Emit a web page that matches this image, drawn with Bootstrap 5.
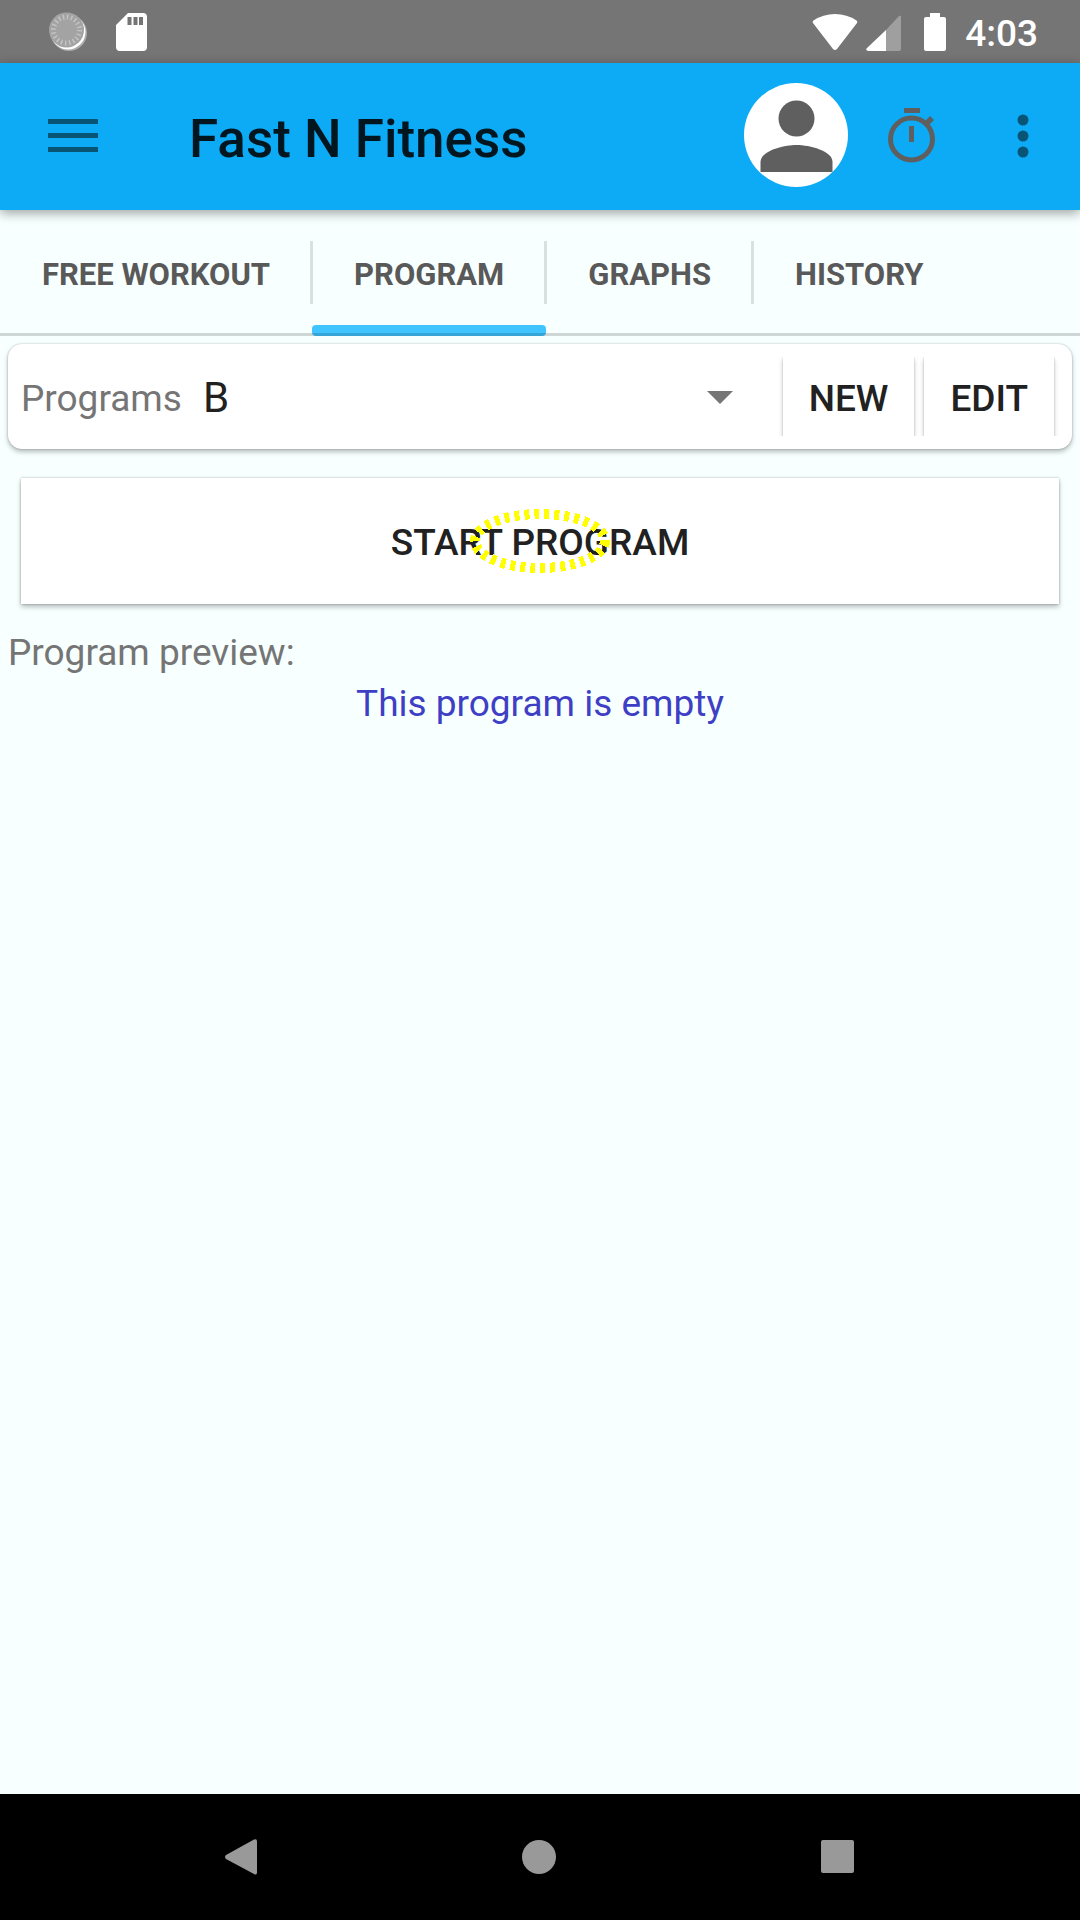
<!DOCTYPE html>
<html lang="en">
<head>
<meta charset="utf-8">
<meta name="viewport" content="width=device-width, initial-scale=1">
<title>Fast N Fitness</title>
<link href="https://cdn.jsdelivr.net/npm/bootstrap@5.3.0/dist/css/bootstrap.min.css" rel="stylesheet">
<style>
  body { font-family: Roboto, "Noto Sans", sans-serif; font-size: 37px; line-height: 51px; background: #f7ffff; color: #212121; }
  svg { display: block; flex: none; }
  .status-strip { height: 63px; background: #757575; color: #fff; padding: 0 42px 0 48px; font-weight: 500; }
  .status-strip time { margin-left: 19px; padding-top: 3px; }
  .app-bar { height: 147px; background: #0dabf6; padding: 0 51px 2px 48px; position: relative; z-index: 2; box-shadow: 0 3px 11px rgba(0,0,0,.38); }
  .app-bar h1 { font-size: 53px; line-height: 64px; font-weight: 500; margin: 6px 0 0 91px; color: #02161f; }
  .icon-btn { border: 0; background: none; padding: 0; }
  .more-btn { padding-left: 41px; }
  .tab-strip { height: 126px; position: relative; }
  .tab-strip::after { content: ""; position: absolute; inset: auto 0 0 0; height: 3px; background: rgba(0,0,0,.16); pointer-events: none; }
  .tab-link { display: flex; align-items: center; height: 126px; padding: 2px 42px 0; font-size: 31px; font-weight: 700; color: #595959; text-decoration: none; position: relative; }
  .tab-item + .tab-item .tab-link::before { content: ""; position: absolute; left: -2px; top: 31px; width: 3px; height: 63px; background: #d9e0e0; }
  .tab-link.active::after { content: ""; position: absolute; inset: auto 0 0 0; height: 11px; border-radius: 4px; background: #40c4ff; }
  .raised { background: #fff; box-shadow: 0 0 2px rgba(0,0,0,.28), 0 3px 5px rgba(0,0,0,.26); }
  .program-card { margin: 8px 8px 0; height: 105px; padding: 13px; border-radius: 14px; }
  .program-card label, .muted-text { color: #757575; }
  .program-card label { padding-top: 3px; }
  .program-select { display: block; border: 0; background: none; appearance: none; font-size: 42px; line-height: 56px; padding: 3px 60px 0 21px; color: #212121; width: 100%; }
  .select-wrap svg { position: absolute; right: 45px; top: 50%; margin-top: -6px; pointer-events: none; }
  .btn-clip { overflow: hidden; padding: 0 5px; }
  .side-btn { display: block; border: 0; padding: 3px 26px 0; height: 79px; font-weight: 500; color: #212121; background: #fff; box-shadow: 0 0 2px rgba(0,0,0,.2), 0 3px 5px rgba(0,0,0,.2); }
  .start-btn { border: 0; height: 126px; margin: 29px 21px 0; padding-top: 3px; font-weight: 500; color: #212121; position: relative; }
  .focus-mark { position: absolute; left: 50%; top: 50%; transform: translate(-50%, -50%); pointer-events: none; }
  .preview-text { padding: 23px 8px 0; }
  .empty-text { color: #3f3fc5; }
  .nav-strip { height: 126px; background: #000; padding: 0 225px; }
</style>
<script src="https://cdn.jsdelivr.net/npm/bootstrap@5.3.0/dist/js/bootstrap.bundle.min.js"></script>
</head>
<body>
<div class="d-flex flex-column min-vh-100">
  <div class="status-strip d-flex align-items-center">
    <svg width="40" height="40" viewBox="0 0 40 40">
      <circle cx="21" cy="21" r="18" fill="#aaa"/>
      <circle cx="20" cy="20" r="17.500" fill="#fff"/>
      <circle cx="18.500" cy="18" r="17.500" fill="#a3a3a3"/>
      <circle cx="18.500" cy="18" r="13" fill="none" stroke="#c4c4c4" stroke-width="5" stroke-dasharray="1.400 2.684"/>
    </svg>
    <svg class="ms-4" width="40" height="40" viewBox="0 0 40 40">
      <path fill="#fff" fill-rule="evenodd" d="M16 1h15q4 0 4 4v30q0 4-4 4H8q-4 0-4-4V13zM15.500 5v8h4V5zM21.500 5v8h4V5zM27 5v8h4V5z"/>
    </svg>
    <svg class="ms-auto" width="46" height="38" viewBox="0 0 46 38">
      <path fill="#fff" d="M1 10Q0 8.500 1.500 7.500Q11 1 23 1t21.500 6.500Q46 8.500 45 10L25 36q-2 2-4 0z"/>
    </svg>
    <svg class="ms-2" width="36" height="38" viewBox="0 0 36 38">
      <path fill="#9f9f9f" d="M20 17L33 3q2-1 2 1v32q0 2-2 2H20z"/>
      <path fill="#fff" d="M20 17v21H2q-3-1-1-3z"/>
    </svg>
    <svg width="44" height="40" viewBox="0 0 44 40">
      <path fill="#fff" d="M28 1h10v4h4q2 0 2 2v30q0 2-2 2H24q-2 0-2-2V7q0-2 2-2h4z"/>
    </svg>
    <time>4:03</time>
  </div>

  <header class="app-bar d-flex align-items-center">
    <button class="icon-btn" type="button" aria-label="Open menu">
      <svg width="50" height="34" viewBox="0 0 50 34" fill="#075475"><path d="M0 0h50v5H0zM0 14h50v5H0zM0 28h50v5H0z"/></svg>
    </button>
    <h1>Fast N Fitness</h1>
    <button class="icon-btn ms-auto" type="button" aria-label="Profile">
      <svg width="104" height="106" viewBox="0 0 104 106">
        <circle cx="52" cy="52" r="52" fill="#fff"/>
        <circle cx="52.500" cy="35.500" r="18" fill="#5f5f5f"/>
        <path fill="#5f5f5f" d="M16.500 89V79C16.500 68 39 62 52.500 62S88.500 68 88.500 79V89z"/>
      </svg>
    </button>
    <button class="icon-btn" type="button" aria-label="Stopwatch">
      <svg width="128" height="60" viewBox="0 0 128 60">
        <circle cx="63.500" cy="33" r="21" fill="none" stroke="#5f5f5f" stroke-width="5"/>
        <path fill="#5f5f5f" d="M56 2h16v5H56zM61 20h5v16h-5zM76 16l6-6 4 4-6 6z"/>
      </svg>
    </button>
    <button class="icon-btn more-btn" type="button" aria-label="More options">
      <svg width="12" height="44" viewBox="0 0 12 44" fill="#075475"><circle cx="6" cy="6" r="5.500"/><circle cx="6" cy="22" r="5.500"/><circle cx="6" cy="38" r="5.500"/></svg>
    </button>
  </header>

  <nav class="tab-strip" aria-label="Sections">
    <ul class="list-unstyled d-flex mb-0">
      <li class="tab-item"><a class="tab-link" href="#">FREE WORKOUT</a></li>
      <li class="tab-item"><a class="tab-link active" href="#" aria-current="page">PROGRAM</a></li>
      <li class="tab-item"><a class="tab-link" href="#">GRAPHS</a></li>
      <li class="tab-item"><a class="tab-link" href="#">HISTORY</a></li>
    </ul>
  </nav>

  <main class="d-flex flex-column flex-grow-1">
    <div class="program-card raised d-flex align-items-center">
      <label for="program">Programs</label>
      <div class="select-wrap position-relative flex-grow-1">
        <select id="program" class="program-select"><option>B</option></select>
        <svg width="26" height="13" viewBox="0 0 26 13"><path fill="#757575" d="M0 0h26L13 13z"/></svg>
      </div>
      <div class="btn-clip"><button class="side-btn" type="button">NEW</button></div>
      <div class="btn-clip"><button class="side-btn" type="button">EDIT</button></div>
    </div>
    <button class="start-btn raised" type="button">START PROGRAM
      <svg class="focus-mark" width="140" height="64" viewBox="0 0 140 64" shape-rendering="crispEdges"><ellipse cx="70" cy="32" rx="65" ry="27" fill="none" stroke="#ff0" stroke-width="10" stroke-dasharray="5 5"/></svg>
    </button>
    <div class="preview-text">
      <div class="muted-text">Program preview:</div>
      <div class="empty-text text-center">This program is empty</div>
    </div>
  </main>

  <footer class="nav-strip d-flex align-items-center justify-content-between">
    <button class="icon-btn" type="button" aria-label="Back"><svg width="32" height="36" viewBox="0 0 32 36"><path fill="#999" d="M29 .6q3-1.500 3 2v31q0 3-3 1.500L1 20q-2-2 0-4z"/></svg></button>
    <button class="icon-btn" type="button" aria-label="Home"><svg width="34" height="36" viewBox="0 0 34 36"><circle cx="17" cy="18" r="17" fill="#999"/></svg></button>
    <button class="icon-btn" type="button" aria-label="Recent apps"><svg width="34" height="36" viewBox="0 0 34 36"><rect y="1" width="33" height="33" rx="2" fill="#999"/></svg></button>
  </footer>
</div>
</body>
</html>
